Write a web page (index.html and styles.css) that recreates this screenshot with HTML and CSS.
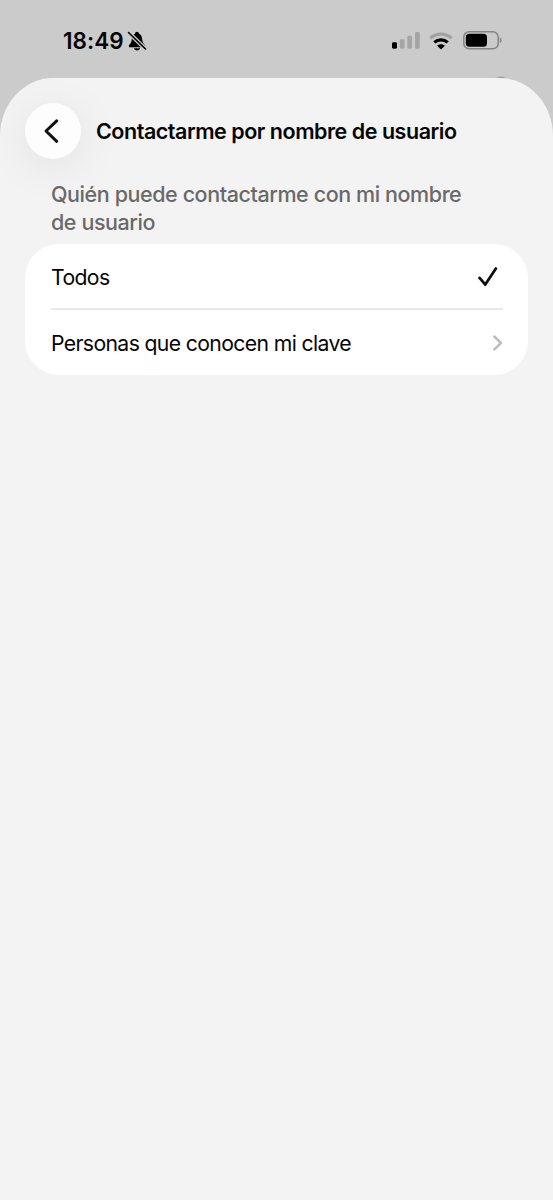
FILE: index.html
```html
<!DOCTYPE html>
<html lang="es">
<head>
<meta charset="utf-8">
<title>Contactarme por nombre de usuario</title>
<link rel="stylesheet" href="styles.css">
</head>
<body>
<div class="screen">
  <header class="status">
    <span class="time">18:49</span>
    <svg class="bell" width="20" height="20" viewBox="0 0 20 20">
      <path d="M1.800 15.300c0-1.900 2.600-2.400 2.900-6.200C4.900 5.300 6 3.500 8 2.700 8.200 1.500 9 .8 10 .8s1.800.7 2 1.900c2 .8 3.100 2.600 3.300 6.400.3 3.800 2.900 4.300 2.900 6.200 0 .5-.4.900-.9.900H2.700c-.5 0-.9-.4-.9-.9ZM7 17.200h6c-.2 1.300-1.300 2.200-3 2.200S7.200 18.500 7 17.200Z"/>
      <path class="slash-gap" d="M1.500 1.500 18.500 18"/>
      <path class="slash" d="M1.500 1.500 18.500 18"/>
    </svg>
    <svg class="signal" width="28" height="18" viewBox="0 0 28 18">
      <rect x="0" y="11.200" width="5" height="6.500" rx="1.400"/>
      <g class="dim"><rect x="7.800" y="8.200" width="4.800" height="9.500" rx="1.400"/><rect x="15.300" y="4.700" width="4.800" height="13" rx="1.400"/><rect x="23" y="1" width="4.800" height="16.700" rx="1.400"/></g>
    </svg>
    <svg class="wifi" width="24" height="18" viewBox="0 0 24 18">
      <path class="arc dim-arc" d="M1.300 6.200C7.300.7 16.700.7 22.700 6.200"/>
      <path class="arc" d="M5.300 10.400c3.700-3.500 9.700-3.500 13.400 0"/>
      <path d="M12 17.500 8.100 13.700c2.200-2 5.600-2 7.800 0Z"/>
    </svg>
    <svg class="battery" width="39" height="19" viewBox="0 0 39 19">
      <rect class="case" x=".8" y=".8" width="34.400" height="17" rx="5.400"/>
      <rect x="2.800" y="2.800" width="21.200" height="13" rx="3.600"/>
      <path class="tip" d="M36.800 6.300c2.300.7 2.300 5.300 0 6Z"/>
    </svg>
  </header>
  <main class="sheet">
    <div class="nav">
      <button class="back" aria-label="Atrás">
        <svg width="56" height="56" viewBox="0 0 56 56"><path d="M31.700 17.800 21 28 31.700 38.300"/></svg>
      </button>
      <h1 class="title">Contactarme por nombre de usuario</h1>
    </div>
    <h2 class="caption">Quién puede contactarme con mi nombre<br>de usuario</h2>
    <div class="card">
      <div class="row row-first">
        <span class="label">Todos</span>
        <svg class="check" width="20" height="20" viewBox="0 0 20 20"><path d="M1.600 10.900 7.300 17.600 17.900 1.600"/></svg>
      </div>
      <div class="row row-next">
        <span class="label">Personas que conocen mi clave</span>
        <svg class="chevron" width="10" height="16" viewBox="0 0 10 16"><path d="M1.300 1.500 8 8 1.300 14.300"/></svg>
      </div>
    </div>
  </main>
</div>
</body>
</html>
```
FILE: styles.css
```css
* { box-sizing: border-box; }
body { margin: 0; background: #cbcbcb; font-family: Inter, "Liberation Sans", sans-serif; color: #050505; }
svg { display: block; flex: none; }
.screen { height: 1200px; display: flex; flex-direction: column; background: radial-gradient(ellipse 6px 2px at 501px 78px, #888, #cbcbcb); overflow: hidden; }
.status { height: 78px; flex: none; display: flex; align-items: flex-start; padding: 31px 50px 0 63px; }
.time { font-size: 22.500px; font-weight: 600; line-height: 20px; letter-spacing: .05px; width: 64px; white-space: nowrap; }
.signal { margin-left: 245px; }
.dim { fill: #a5a5a5; }
.wifi { margin: 1px 0 0 9px; }
.arc { fill: none; stroke: #000; stroke-width: 3.200; }
.arc.dim-arc { stroke: #a1a1a1; }
.battery { margin-left: 10px; }
.case { fill: none; stroke: #858585; stroke-width: 1.500; }
.tip { fill: #858585; }
.slash-gap { stroke: #cbcbcb; stroke-width: 4; }
.slash { stroke: #000; stroke-width: 1.600; stroke-linecap: round; }
.sheet { flex: 1; background: #f3f3f3; border-radius: 53px 53px 0 0 / 58px 58px 0 0; padding: 25px 25px 0; overflow: hidden; }
.nav { display: flex; align-items: center; height: 56px; }
.back { width: 56px; height: 56px; border: 0; padding: 0; border-radius: 50%; background: #fdfdfd; box-shadow: 0 8px 46px rgba(0, 0, 0, .08); }
.back path { fill: none; stroke: #111; stroke-width: 3; stroke-linecap: round; stroke-linejoin: round; }
.title { margin: 0 0 0 15px; font-size: 21.500px; font-weight: 600; letter-spacing: -.47px; white-space: nowrap; }
.caption { position: relative; margin: 21px 0 0 26px; font-size: 21.500px; line-height: 28px; font-weight: 550; letter-spacing: -.42px; color: #696969; white-space: nowrap; }
.card { margin-top: 8px; width: 503px; height: 131px; padding: 0 25px 0 26px; background: #fff; border-radius: 34px; }
.row { height: 66px; display: flex; align-items: center; justify-content: space-between; }
.row-first { padding-top: 2px; border-bottom: 2px solid #e9e9e9; }
.row-next { height: 65px; }
.label { font-size: 21.200px; letter-spacing: -.63px; }
.check { margin-right: 5px; }
.check path { fill: none; stroke: #111; stroke-width: 2.800; stroke-linecap: round; stroke-linejoin: round; }
.chevron path { fill: none; stroke: #bdbdbd; stroke-width: 2.500; stroke-linecap: round; stroke-linejoin: round; }
```
